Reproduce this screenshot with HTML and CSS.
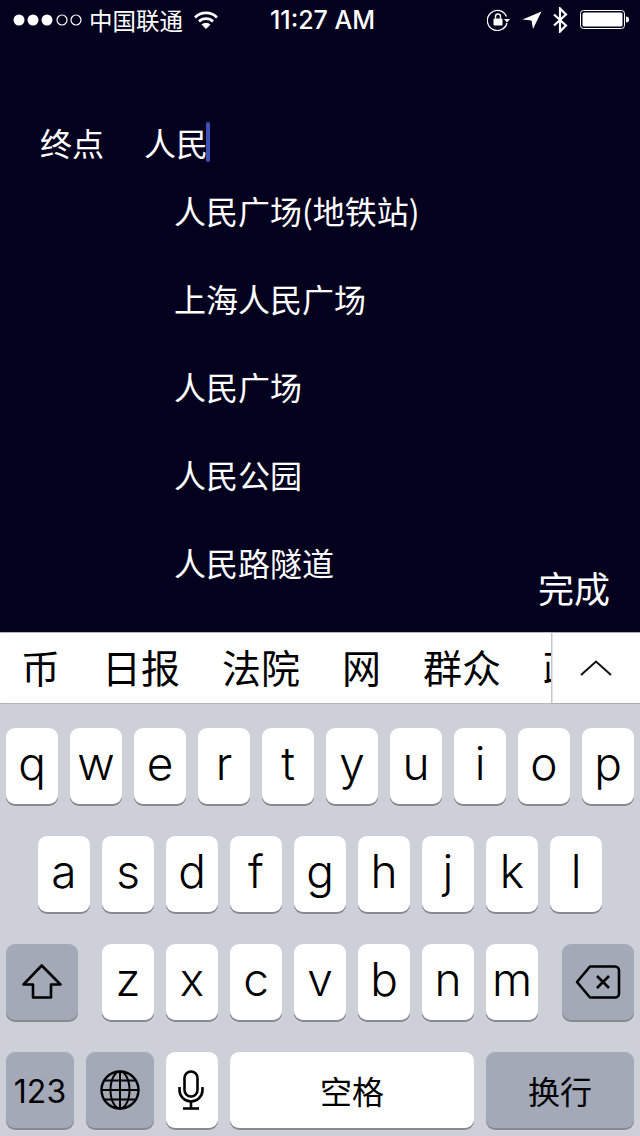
FILE: index.html
```html
<!DOCTYPE html>
<html lang="zh-CN">
<head>
<meta charset="utf-8">
<title>终点</title>
<link rel="stylesheet" href="styles.css">
</head>
<body>
<main class="screen">
  <header class="status">
    <div class="status-left">
      <svg class="signal" width="70" height="14" viewBox="0 0 70 14"><circle cx="6" cy="7" r="5.5" fill="#fff"/><circle cx="20" cy="7" r="5.5" fill="#fff"/><circle cx="34" cy="7" r="5.5" fill="#fff"/><circle cx="49" cy="7" r="5" fill="none" stroke="#fff" stroke-width="1.2"/><circle cx="63" cy="7" r="5" fill="none" stroke="#fff" stroke-width="1.2"/></svg>
      <span class="carrier">中国联通</span>
      <svg class="wifi" width="24" height="18" viewBox="0 0 24 18"><path d="M1 6.500a15.500 15.500 0 0 1 22 0" fill="none" stroke="#fff" stroke-width="2.600"/><path d="M5 10.500a10 10 0 0 1 14 0" fill="none" stroke="#fff" stroke-width="2.600"/><path d="M12 18l-4.500-4.500a6.400 6.400 0 0 1 9 0z" fill="#fff"/></svg>
    </div>
    <div class="time">11:27 AM</div>
    <div class="status-right">
      <svg class="icon-lock" width="24" height="22" viewBox="0 0 24 22"><path d="M19.500 7.500a10 10 0 1 0 .5 6.500" fill="none" stroke="#fff" stroke-width="1.300"/><path d="M17 10h6l-3 3.500z" fill="#fff"/><rect x="6.500" y="9.500" width="9" height="7" rx="1" fill="#fff"/><path d="M8.500 9.500V7.500a2.500 2.500 0 0 1 5 0v2" fill="none" stroke="#fff" stroke-width="1.400"/></svg>
      <svg width="20" height="18" viewBox="0 0 20 18"><path d="M19.500 .5L11 18l-1.500-8.500L.5 8.500z" fill="#fff"/></svg>
      <svg class="icon-bt" width="16" height="26" viewBox="0 0 16 26"><path d="M2 7.500L14 18.500L8 24.500V1.500L14 7.500L2 18.500" fill="none" stroke="#fff" stroke-width="2.200"/></svg>
      <svg width="50" height="20" viewBox="0 0 50 20"><rect x=".5" y=".5" width="44" height="18" rx="3" fill="none" stroke="#fff"/><rect x="2.500" y="2.500" width="40" height="14" rx="1.500" fill="#fff"/><path d="M46 6.500c2 0 3 1 3 3s-1 3-3 3z" fill="#fff"/></svg>
    </div>
  </header>

  <section class="field">
    <span class="field-label">终点</span>
    <span class="field-value">人民</span>
    <span class="cursor"></span>
  </section>

  <section class="results">
    <ul class="suggestions">
      <li>人民广场(地铁站)</li>
      <li>上海人民广场</li>
      <li>人民广场</li>
      <li>人民公园</li>
      <li>人民路隧道</li>
    </ul>
    <button class="done">完成</button>
  </section>
</main>

<section class="candidates">
  <div class="candidate-list">
    <span>币</span><span>日报</span><span>法院</span><span>网</span><span>群众</span><span>政</span>
  </div>
  <div class="expand">
    <svg width="32" height="16" viewBox="0 0 32 16"><path d="M1 15L16 1.500L31 15" fill="none" stroke="#111" stroke-width="2"/></svg>
  </div>
</section>

<section class="keyboard">
  <div class="row">
    <div class="key">q</div><div class="key">w</div><div class="key">e</div><div class="key">r</div><div class="key">t</div><div class="key">y</div><div class="key">u</div><div class="key">i</div><div class="key">o</div><div class="key">p</div>
  </div>
  <div class="row">
    <div class="key">a</div><div class="key">s</div><div class="key">d</div><div class="key">f</div><div class="key">g</div><div class="key">h</div><div class="key">j</div><div class="key">k</div><div class="key">l</div>
  </div>
  <div class="row">
    <div class="key fn wide shift">
      <svg width="40" height="36" viewBox="0 0 40 36"><path d="M19.700 1.500L1.500 20.500H11V33.500H29V20.500H38.500z" fill="none" stroke="#000" stroke-width="2.600" stroke-linejoin="round"/></svg>
    </div>
    <div class="key">z</div><div class="key">x</div><div class="key">c</div><div class="key">v</div><div class="key">b</div><div class="key">n</div><div class="key">m</div>
    <div class="key fn wide delete">
      <svg width="46" height="34" viewBox="0 0 46 34"><path d="M15 1.500H40a4 4 0 0 1 4 4V28.500a4 4 0 0 1-4 4H15L2 17z" fill="none" stroke="#000" stroke-width="2.600" stroke-linejoin="round"/><path d="M22 11L34 23M34 11L22 23" fill="none" stroke="#000" stroke-width="2.600"/></svg>
    </div>
  </div>
  <div class="row">
    <div class="key fn bottom num">123</div>
    <div class="key fn bottom globe">
      <svg width="40" height="40" viewBox="0 0 40 40" fill="none" stroke="#000" stroke-width="2"><circle cx="20" cy="20" r="18.500" stroke-width="2.400"/><ellipse cx="20" cy="20" rx="9.500" ry="18.500"/><path d="M20 1.500V38.500M1.500 20H38.500M4.500 10.500H35.500M4.500 29.500H35.500"/></svg>
    </div>
    <div class="key mic">
      <svg class="mic-icon" width="26" height="40" viewBox="0 0 26 40" fill="none" stroke="#000" stroke-width="2.600"><rect x="6.500" y="1.500" width="13" height="25" rx="6.500"/><path d="M1.500 17V20a11.500 11.500 0 0 0 23 0V17M13 31.500V38.500"/><path d="M5 38.500H21"/></svg>
    </div>
    <div class="key space">空格</div>
    <div class="key fn return">换行</div>
  </div>
</section>
</body>
</html>
```

FILE: styles.css
```css
* { box-sizing: border-box; }

html, body {
  margin: 0;
  padding: 0;
}

body {
  width: 640px;
  height: 1136px;
  overflow: hidden;
  font-family: "Inter", "Liberation Sans", "Noto Sans CJK SC", sans-serif;
  background: #cdd0d9;
}

.screen {
  height: 632px;
  background: #04011f;
  color: #fff;
  display: flex;
  flex-direction: column;
}

/* status bar */
.status {
  height: 40px;
  padding: 0 10px 0 13px;
  display: grid;
  grid-template-columns: 1fr auto 1fr;
  align-items: center;
}

.status-left {
  display: flex;
  align-items: center;
}

.carrier {
  margin-left: 6px;
  font-size: 23.500px;
  line-height: 40px;
  font-family: "Noto Sans CJK SC", sans-serif;
  font-weight: 400;
}

.wifi { margin-left: 11px; }

.time {
  font-size: 25px;
  font-weight: 500;
  padding-left: 2px;
}

.status-right {
  display: flex;
  align-items: center;
  justify-content: flex-end;
  gap: 10px;
}

.icon-lock { margin-right: 1px; }
.icon-bt { margin-right: 2px; }

/* destination field */
.field {
  margin: 82px 0 6px;
  padding-left: 40px;
  height: 40px;
  display: flex;
  align-items: center;
  font-family: "Noto Sans CJK SC", sans-serif;
  font-size: 32px;
  font-weight: 400;
  line-height: 36px;
}

.field-value { margin-left: 40px; }

.cursor {
  width: 4px;
  height: 40px;
  margin-left: -2px;
  border-radius: 2px;
  background: #3b51b5;
}

/* suggestions */
.results {
  display: flex;
  flex: 1;
  justify-content: space-between;
}

.suggestions {
  list-style: none;
  margin: 0;
  padding: 0 0 0 174px;
  font-family: "Noto Sans CJK SC", sans-serif;
  font-size: 32px;
  font-weight: 400;
}

.suggestions li {
  height: 88px;
  line-height: 84px;
}

.done {
  align-self: flex-end;
  margin: 0 30px 21px 0;
  padding: 0;
  border: 0;
  background: none;
  color: #fff;
  font-family: "Noto Sans CJK SC", sans-serif;
  font-size: 36px;
  font-weight: 400;
  line-height: 48px;
}

/* candidate bar */
.candidates {
  height: 72px;
  display: flex;
  background: #fff;
  border-top: 1px solid #a9acb3;
  border-bottom: 1px solid #a9acb3;
}

.candidate-list {
  width: 552px;
  padding: 0 0 4px 21px;
  display: flex;
  align-items: center;
  gap: 42px;
  overflow: hidden;
  white-space: nowrap;
  font-family: "Noto Sans CJK SC", sans-serif;
  font-size: 39px;
  font-weight: 400;
  color: #000;
  border-right: 1px solid #c4c6cb;
  box-shadow: 1px 0 1px #e3e4e7;
}

.candidate-list span { flex: none; }

.expand {
  flex: 1;
  display: flex;
  align-items: center;
  justify-content: center;
}

/* keyboard */
.keyboard {
  padding-top: 24px;
  display: flex;
  flex-direction: column;
  gap: 32px;
}

.row {
  display: flex;
  justify-content: center;
  gap: 12px;
}

.key {
  width: 52px;
  height: 76px;
  display: flex;
  align-items: center;
  justify-content: center;
  background: #fff;
  border-radius: 9px;
  box-shadow: 0 2px 0 #888b92;
  color: #000;
  font-size: 46px;
  font-weight: 300;
  line-height: 1;
  padding-bottom: 7px;
}

.fn {
  background: #a4a9b8;
  padding-bottom: 0;
}

.wide { width: 72px; }
.shift { margin-right: 12px; }
.delete { margin-left: 12px; }

.bottom { width: 68px; }
.mic { padding-bottom: 0; }
.mic-icon { margin-right: 2px; }

.num {
  font-size: 32px;
  font-weight: 400;
  padding-top: 3px;
}

.space {
  width: 244px;
  padding-bottom: 0;
  font-family: "Noto Sans CJK SC", sans-serif;
  font-size: 32px;
  font-weight: 400;
}

.return {
  width: 148px;
  font-family: "Noto Sans CJK SC", sans-serif;
  font-size: 32px;
  font-weight: 400;
}
```
